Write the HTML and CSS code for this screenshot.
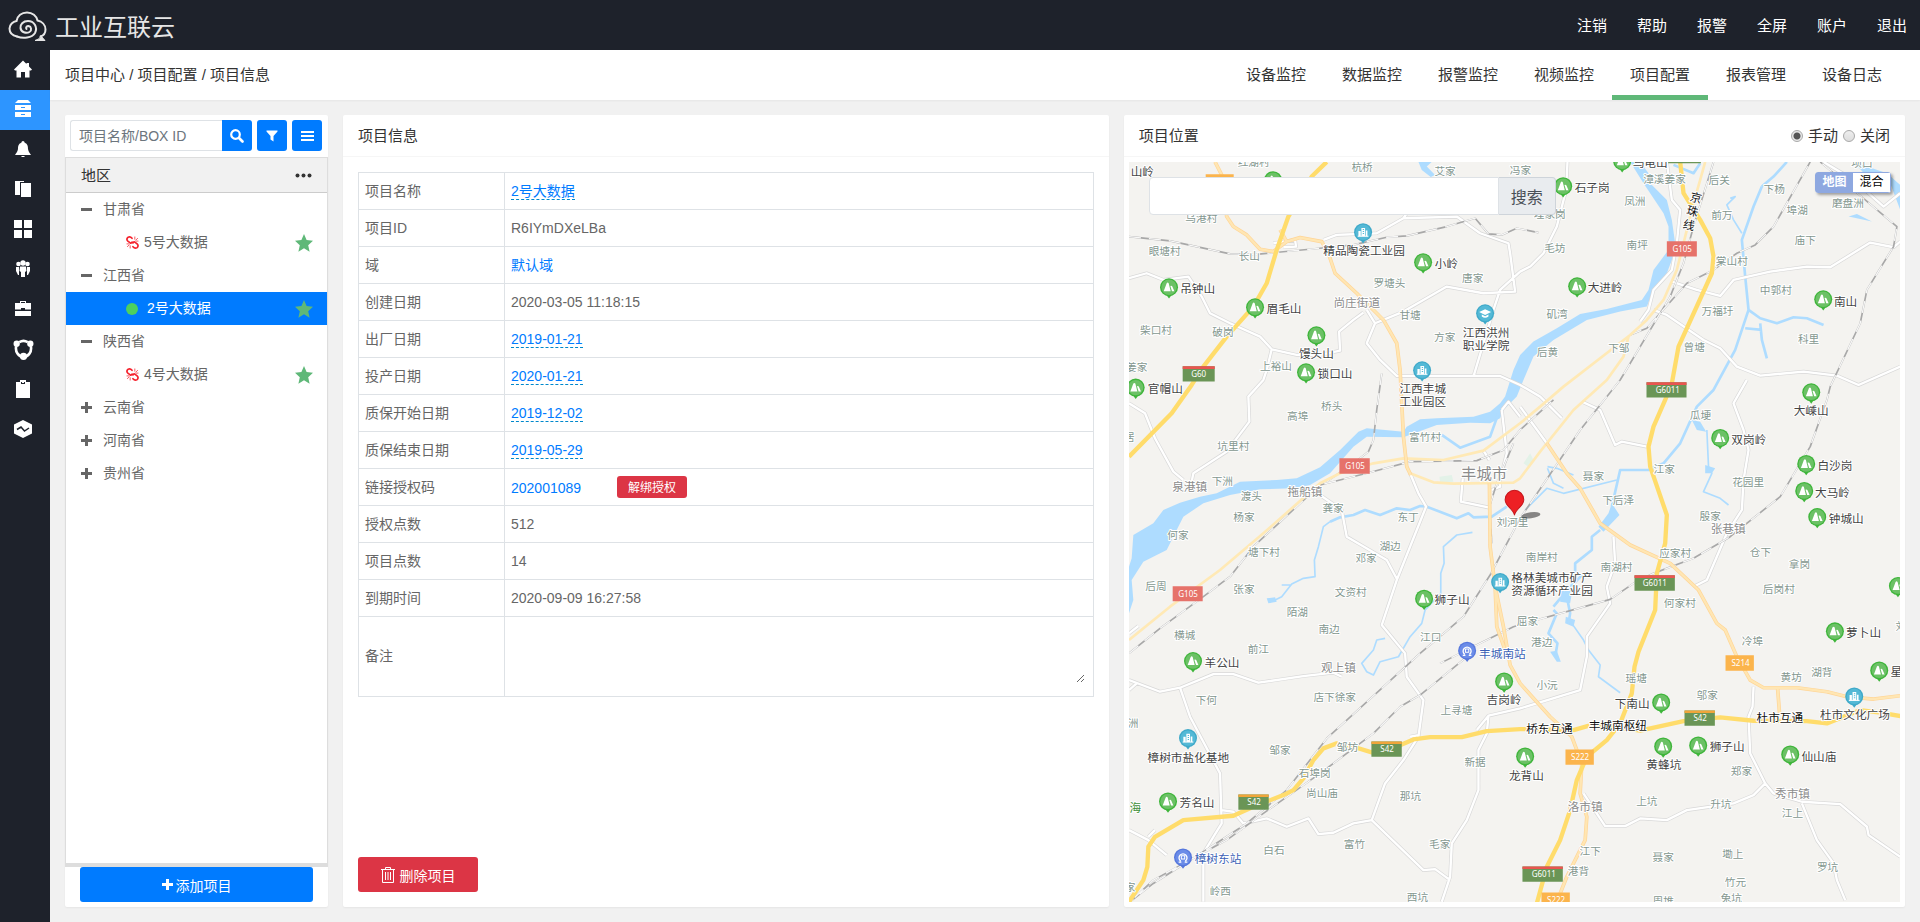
FILE: index.html
```html
<!DOCTYPE html>
<html lang="zh-CN">

<head>
  <meta charset="UTF-8" />
  <meta name="viewport" content="width=device-width, initial-scale=1.0" />
  <title>工业互联云</title>
  <link rel="stylesheet" href="styles.css">
</head>

<body>
  <header class="header">
    <a href="#" class="logo">
      <svg width="40" height="32" viewBox="0 0 40 32" fill="none" stroke="#e6e6e6" stroke-width="2" stroke-linecap="round">
        <path d="M9 25.500C4 24.500 1.500 21.500 1.500 17.500C1.500 13.500 5 10.500 8.500 10C9.500 5 13.500 1.500 19 1.500C24.500 1.500 28.500 5 29.500 9.500C34 10.500 37.500 14 37.500 18.500C37.500 22 35.500 24.500 32.500 25.500"/>
        <path d="M9 25.500C15 28 24 27 27 22C30 16 26 10 20 10C15 10 12 13.500 12.500 17C13 21 18 23 21.500 21C24 19.500 23.500 15.500 20.500 15C18.500 15 17.500 16.500 18.500 18"/>
        <path d="M33 25L37 29.500H27Q32 28.500 33 25Z" fill="#e6e6e6" stroke-width="1"/>
      </svg>
      <span>工业互联云</span>
    </a>
    <nav class="header-nav">
      <a href="#">注销</a>
      <a href="#">帮助</a>
      <a href="#">报警</a>
      <a href="#">全屏</a>
      <a href="#">账户</a>
      <a href="#">退出</a>
    </nav>
  </header>

  <div class="layout">
    <nav class="side">
      <a href="#" aria-label="首页"><svg viewBox="0 0 18 18"><path d="M9 0.500L0 9.500L1 10.500H2.500V17.500H7V12H11V17.500H15.500V10.500H17L18 9.500L15 6.500V3H12.500V4Z"/></svg></a>
      <a href="#" class="active" aria-label="项目"><svg viewBox="0 0 18 18"><path d="M4 0H14L17 3H1ZM1 5H17V10H1ZM1 12H17V17H1Z"/><path class="cut" d="M7 7H11V8H7ZM7 14H11V15H7Z"/></svg></a>
      <a href="#" aria-label="报警"><svg viewBox="0 0 18 18"><path d="M9 1C10 1 10.500 2 10.500 2.500C14 4 14 7 14 9C14.500 12 16 13 17 15H1C2 13 3.500 12 4 9C4 7 4 4 7.500 2.500C7.500 2 8 1 9 1ZM7 16H11L10 17H8Z"/></svg></a>
      <a href="#" aria-label="文件"><svg viewBox="0 0 18 18"><path d="M1 1H10V2H6V15H1ZM7 3H17V17H7Z"/></svg></a>
      <a href="#" aria-label="面板"><svg viewBox="0 0 18 18"><path d="M0 0H8V8H0ZM10 0H18V8H10ZM0 10H8V18H0ZM10 10H18V18H10Z"/></svg></a>
      <a href="#" aria-label="用户"><svg viewBox="0 0 18 18"><circle cx="4.500" cy="4" r="2.300"/><circle cx="13.500" cy="4" r="2.300"/><circle cx="9" cy="3" r="2.700"/><path d="M2 7H5V15H4L2 11ZM16 7H13V15H14L16 11ZM6 6.500H12L12.500 11L11 12V17H7V12L5.500 11Z"/></svg></a>
      <a href="#" aria-label="工具"><svg viewBox="0 0 18 18"><path d="M6 1H12V3H17V9.500H11V8H7V9.500H1V3H6ZM7 2V3H11V2ZM1 11H17V16H1Z" fill-rule="evenodd"/></svg></a>
      <a href="#" aria-label="共享"><svg class="big" viewBox="0 0 20 20"><path d="M3 7C2 12 5 17 10 17C15 17 18 12 17 7M6 3Q10 0.500 14 3" fill="none" stroke="#fff" stroke-width="2.500"/><circle cx="3.500" cy="4.500" r="3"/><circle cx="16.500" cy="4.500" r="3"/><circle cx="10" cy="16.500" r="3.500"/></svg></a>
      <a href="#" aria-label="报表"><svg viewBox="0 0 18 18"><path d="M2 2H16V18H2ZM6 0H12V5H6Z"/><path class="hole" d="M7 2V4H11V2H10V3H8V2Z"/></svg></a>
      <a href="#" aria-label="趋势"><svg viewBox="0 0 18 18"><path d="M9 0L18 4.500V13.500L9 18L0 13.500V4.500Z"/><path d="M3 9.500L7 7L10.500 11L15 8" fill="none" stroke="#1e222b" stroke-width="1.500"/></svg></a>
    </nav>

    <main class="main">
      <div class="sub-bar">
        <div class="crumb">项目中心 / 项目配置 / 项目信息</div>
        <nav class="tabs">
          <a href="#">设备监控</a>
          <a href="#">数据监控</a>
          <a href="#">报警监控</a>
          <a href="#">视频监控</a>
          <a href="#" class="active">项目配置</a>
          <a href="#">报表管理</a>
          <a href="#">设备日志</a>
        </nav>
      </div>

      <div class="content">
        <!-- 项目列表 -->
        <section class="card project-list">
          <div class="tool-bar">
            <div class="search-box">
              <input type="text" placeholder="项目名称/BOX ID" aria-label="项目名称/BOX ID" />
              <button type="button" aria-label="搜索"><svg width="14" height="14" viewBox="0 0 14 14"><circle cx="5.500" cy="5.500" r="4.300" fill="none" stroke="#fff" stroke-width="2.200"/><path d="M9 9L12.500 12.500" stroke="#fff" stroke-width="2.600" stroke-linecap="round"/></svg></button>
            </div>
            <button type="button" aria-label="筛选"><svg width="12" height="12" viewBox="0 0 12 12"><path d="M0.500 0.500H11.500V1.500L7.500 6V11.500L4.500 9.500V6L0.500 1.500Z" fill="#fff"/></svg></button>
            <button type="button" aria-label="列表"><svg width="13" height="12" viewBox="0 0 13 12"><path d="M0 1H13V3H0ZM0 5H13V7H0ZM0 9H13V11H0Z" fill="#fff"/></svg></button>
          </div>
          <div class="tree">
            <div class="tree-title">
              <span>地区</span>
              <svg width="17" height="5" viewBox="0 0 17 5"><circle cx="2.500" cy="2.500" r="2"/><circle cx="8.500" cy="2.500" r="2"/><circle cx="14.500" cy="2.500" r="2"/></svg>
            </div>
            <ul>
              <li class="area"><svg class="sign" viewBox="0 0 11 11"><path d="M0 4H11V7H0Z"/></svg>甘肃省</li>
              <li class="project"><svg class="link-off" viewBox="0 0 14 14"><use href="#unlink"/></svg><a href="#">5号大数据</a><svg class="star" viewBox="0 0 18 18"><use href="#star"/></svg></li>
              <li class="area"><svg class="sign" viewBox="0 0 11 11"><path d="M0 4H11V7H0Z"/></svg>江西省</li>
              <li class="project active"><i class="dot"></i><a href="#">2号大数据</a><svg class="star" viewBox="0 0 18 18"><use href="#star"/></svg></li>
              <li class="area"><svg class="sign" viewBox="0 0 11 11"><path d="M0 4H11V7H0Z"/></svg>陕西省</li>
              <li class="project"><svg class="link-off" viewBox="0 0 14 14"><use href="#unlink"/></svg><a href="#">4号大数据</a><svg class="star" viewBox="0 0 18 18"><use href="#star"/></svg></li>
              <li class="area"><svg class="sign" viewBox="0 0 11 11"><path d="M0 4H4V0H7V4H11V7H7V11H4V7H0Z"/></svg>云南省</li>
              <li class="area"><svg class="sign" viewBox="0 0 11 11"><path d="M0 4H4V0H7V4H11V7H7V11H4V7H0Z"/></svg>河南省</li>
              <li class="area"><svg class="sign" viewBox="0 0 11 11"><path d="M0 4H4V0H7V4H11V7H7V11H4V7H0Z"/></svg>贵州省</li>
            </ul>
          </div>
          <div class="list-foot">
            <button type="button"><svg width="11" height="11" viewBox="0 0 11 11"><path d="M0 4H4V0H7V4H11V7H7V11H4V7H0Z" fill="#fff"/></svg>添加项目</button>
          </div>
        </section>

        <!-- 项目信息 -->
        <section class="card project-info">
          <h2 class="card-title">项目信息</h2>
          <div class="info-body">
            <table>
              <tr><th>项目名称</th><td><a href="#" class="edit">2号大数据</a></td></tr>
              <tr><th>项目ID</th><td>R6IYmDXeLBa</td></tr>
              <tr><th>域</th><td><a href="#">默认域</a></td></tr>
              <tr><th>创建日期</th><td>2020-03-05 11:18:15</td></tr>
              <tr><th>出厂日期</th><td><a href="#" class="edit">2019-01-21</a></td></tr>
              <tr><th>投产日期</th><td><a href="#" class="edit">2020-01-21</a></td></tr>
              <tr><th>质保开始日期</th><td><a href="#" class="edit">2019-12-02</a></td></tr>
              <tr><th>质保结束日期</th><td><a href="#" class="edit">2019-05-29</a></td></tr>
              <tr><th>链接授权码</th><td><a href="#">202001089</a><button type="button" class="unbind">解绑授权</button></td></tr>
              <tr><th>授权点数</th><td>512</td></tr>
              <tr><th>项目点数</th><td>14</td></tr>
              <tr><th>到期时间</th><td>2020-09-09 16:27:58</td></tr>
              <tr class="remark"><th><label for="remark">备注</label></th><td><textarea id="remark"></textarea></td></tr>
            </table>
            <button type="button" class="delete"><svg width="14" height="16" viewBox="0 0 14 16" fill="none" stroke="#fff"><path d="M0 2.500H14M4.500 2V0.500H9.500V2M1.500 3V15.500H12.500V3M4.500 5V13M7 5V13M9.500 5V13"/></svg>删除项目</button>
          </div>
        </section>

        <!-- 项目位置 -->
        <section class="card project-map">
          <div class="card-title">
            <h2>项目位置</h2>
            <div class="mode">
              <input type="radio" name="mode" id="manual" checked /><label for="manual">手动</label>
              <input type="radio" name="mode" id="close" /><label for="close">关闭</label>
            </div>
          </div>
          <div class="map">
            <svg class="map-svg" viewBox="27 156 2313 2220" preserveAspectRatio="xMidYMid slice">
              <defs>
                <g id="pin"><path d="M-9 22L0 34L9 22Z"/><circle r="27"/></g>
                <g id="hill"><use href="#pin" fill="#3eb53a"/><circle r="23" fill="#6cc166"/><path d="M-16 12L-7 -12Q-4 -16 -1 -12L5 12ZM4 -4Q8 -6 10 -2L16 12H9Z" fill="#fff"/></g>
                <g id="building"><use href="#pin" fill="#3fa9c9"/><circle r="23" fill="#54b9d6"/><path d="M-14 12V-4H-7V12ZM-5 12V-13H6V12ZM8 12V-5H13V12Z" fill="#fff"/><path d="M-16 12H16" stroke="#fff" stroke-width="3"/><path d="M-1 -8H3M-1 -2H3M-1 4H3" stroke="#54b9d6" stroke-width="3"/></g>
                <g id="school"><use href="#pin" fill="#3fa9c9"/><circle r="23" fill="#54b9d6"/><path d="M-18 -4L0 -12L18 -4L0 5ZM-10 4L0 9L10 4V10Q0 17 -10 10Z" fill="#fff"/></g>
                <g id="station"><use href="#pin" fill="#5677dc"/><circle r="23" fill="#6b8ce8"/><path d="M-7 11A12 12 0 1 1 7 11M-13 14H-5M5 14H13" fill="none" stroke="#fff" stroke-width="4"/><path d="M-5 -5H5V5H-5Z" fill="none" stroke="#fff" stroke-width="3"/></g>
                <path id="star" d="M9 0L11.600 6.100L18 6.800L13.200 11.200L14.600 17.700L9 14.300L3.400 17.700L4.800 11.200L0 6.800L6.400 6.100Z"/>
                <g id="unlink" fill="none" stroke="#f5222d" stroke-linecap="round"><path d="M6.500 2.500Q4.500 0 2 1.500Q0 3.500 2 5.500L4.500 7.500Q6 8 6.500 6.500M7.500 11.500Q9.500 14 12 12.500Q14 10.500 12 8.500L9.500 6.500Q8 6 7.500 7.500" stroke-width="1.800"/><path d="M9.500 3.500V1M10.500 4.500L12.500 2.500M11 5.500H13M4.500 10.500V13M3.500 9.500L1.500 11.500M3 8.500H1" stroke-width="0.800"/></g>
              </defs>

              <!-- 水系 -->
              <g class="water">
                <path d="M1530 156L1570 220L1630 310L1645 350L1645 420L1600 480L1585 540L1565 570L1460 597L1380 612L1310 655L1240 695L1200 735L1180 780L1155 860L1140 880L1110 905L1060 920L950 925L900 928L860 950L850 965L740 955L715 965L660 1020L600 1072L530 1105L470 1110L360 1115L290 1150L240 1160L180 1178L130 1200L100 1240L40 1275L35 1345L27 1370V1510L40 1470L35 1410L70 1355L140 1320L170 1260L190 1220L250 1180L330 1155L420 1138L520 1135L570 1125L630 1090L700 1010L740 980L850 982L950 945L1050 938L1110 940L1140 925L1150 900L1190 860L1210 810L1240 740L1300 690L1400 630L1500 605L1580 590L1600 540L1640 490L1655 450L1665 400L1655 330L1640 270L1590 220L1585 190L1560 156Z"/>
                <path d="M895 156L905 180L932 201L945 195L920 170L935 156ZM1475 1180L1498 1215L1450 1265L1435 1250L1465 1210ZM1715 930L1740 935L1758 965L1730 960ZM2185 320L2210 312L2255 335ZM1755 1065L1785 1075L1775 1090H1755ZM440 1465L465 1462L470 1475L445 1480ZM1320 1440L1355 1450L1350 1480L1320 1475ZM1337 1520L1365 1530L1360 1550L1335 1540ZM1290 1625L1310 1622L1322 1655H1310ZM2200 156L2240 200L2310 220L2340 300V225L2300 190Z"/>
                <path class="w8" d="M965 975L1020 1013L1110 980L1135 910M630 1235L660 1222L700 1215L735 1200L780 1215L830 1195L870 1200L900 1188L920 1190L1010 1225L1045 1210L1060 1222L1115 1220L1160 1190M1925 230L1900 290L1865 390L1875 500L1885 600L1845 720L1780 840L1730 890L1680 1000L1630 1060L1585 1080L1500 1080L1475 1190M2000 156L1960 200L1925 230M1885 600L1920 625L1970 640L2020 622L2060 625L2110 645M1920 640L1925 690L1940 745M1875 655L1925 660M1660 165L1720 190L1740 160"/>
                <path class="w5" d="M630 1235L610 1250L595 1310L583 1350L585 1400L550 1405L515 1422L485 1460L465 1470M515 1425L485 1425M1057 1267L1010 1275L970 1310L972 1360L962 1390V1450L915 1500L905 1540L870 1580L835 1640L780 1655L760 1695L740 1685L725 1660L760 1620L770 1590L795 1585M1215 1200L1280 1135L1330 1150L1490 1110M1282 1070L1310 1075L1360 1095M1282 1075L1300 1120L1330 1135M1830 265L1845 260L1820 285L1840 330L1865 370M1760 960L1765 1070L1775 1090L1750 1145L1800 1165L1825 1185M1355 1540L1390 1590L1405 1620L1440 1665L1435 1700L1500 1748"/>
                <path class="w8" d="M1440 1260L1415 1280V1320L1365 1360V1400L1340 1460L1350 1510L1345 1540M1300 1500L1310 1510L1285 1570L1312 1600L1305 1640M1300 1490L1325 1460L1390 1390"/>
              </g>
              <path d="M958 1100L995 1095L1000 1115L960 1117ZM1210 1060L1230 1030L1240 1050L1225 1070Z" fill="#e3f2e8"/>

              <!-- 县乡道路 -->
              <g class="road-edge">
                <path id="lanes" d="M27 505L80 490L130 510L205 500L245 560L270 610L330 640L420 680L455 718L530 735H600L660 722L657 665L700 630L730 608M455 718L440 780L430 810L385 860L388 935L320 1025L220 1090L215 1115M27 880L75 910L105 985L160 1085L190 1110M610 390L650 375L770 370L850 325L1010 320L1080 370L1165 400L1170 430L1185 545L1090 550L980 530L850 605L765 640L740 700L780 750L830 798H1140L1200 825L1260 860L1325 925M740 600L765 640M850 325L860 310M1200 485L1140 540L1120 600L1060 800M1342 156L1338 240L1310 350L1270 430L1230 470L1200 485M1640 156L1655 270L1680 300L1670 400L1655 480L1600 540L1585 600L1560 635M1655 515L1730 540L1800 558L1840 510L1950 485L2060 470L2130 472L2250 398L2320 412L2340 395M1600 600L1640 615L1750 690L1800 715L1850 770L1920 797L2050 785L2150 797L2215 825L2340 770M1880 810L1840 880L1870 960L1885 1020L1870 1110L1865 1200L1820 1270L1760 1410L1720 1430M1385 875L1440 900L1485 1005L1505 995L1580 1010M1200 890L1280 1000M1480 1280L1485 1360L1460 1430L1470 1480L1400 1580V1640L1380 1740L1200 1795L1105 1817L1100 1870L1075 1920V2040L1040 2130L995 2200L990 2300L965 2375M870 1090L895 1150L918 1190L830 1410L785 1545L855 1630L860 1700L910 1770L895 1880L850 1950L795 2020L755 2130L910 2280L945 2277L990 2310M600 1155L665 1200L680 1280L800 1350L832 1410M27 1710L120 1745L180 1733L280 1692H340L415 1718L550 1698L640 1688L665 1700M27 1740L50 1720M180 1733L210 1820L300 1990L305 2140L280 2180L250 2230V2375M305 2100L340 2105L370 2140L440 2125L500 2150L565 2125L595 2172L640 2168L700 2140L755 2130M27 2160L85 2190L140 2235M85 2180L105 2160M870 1880L895 1875M1900 1730L1897 1790L1885 1820L1890 1930L1935 2020L1960 2050L2045 2075L2160 2082L2240 2150L2245 2175L2340 2240M2045 2080L2090 2190L2140 2260L2150 2310L2175 2370M1935 2020L1900 2055L1840 2080L1700 2100L1640 2130L1560 2125L1515 2148H1455L1390 2050M2110 156L2200 210L2290 290L2340 250M1028 1105L1022 1175L1108 1193M1090 1022L1108 1050M1115 1140L1140 1130V1110M1145 900L1165 875L1200 920M1145 900L1160 1030L1140 1110M1070 1860L1105 1817M27 1570L55 1548M460 400L525 390L528 410L490 412"/>
              </g>
              <use href="#lanes" class="road-face"/>

              <!-- 铁路 -->
              <g class="rail-edge">
                <path id="rails" d="M27 380L150 393L330 432L400 434L600 415L700 405L800 382L860 378L980 350L1065 325L1105 372L1145 375L1190 355L1255 368M785 790L770 900L760 990L745 1025L700 1060L620 1115M27 1630L120 1555L250 1460L330 1400L400 1310L600 1125L740 1090L870 1055L1070 1052L1150 1020L1200 960L1300 870M1530 675L1580 655L1700 520L1780 480L1850 430L1905 405L1960 350L2070 156M1780 156L1720 350L1690 460L1650 560L1500 810L1380 960L1200 1225L1110 1395L1030 1520L900 1630L620 1885L500 2040L380 2140L250 2225L100 2320L30 2375M1080 1600L1180 1550L1470 1468L1540 1420L1600 1390L1720 1345L1830 1280L1980 1160L2070 1010L2120 870L2130 830L2220 640L2240 540L2320 410L2330 350L2100 156M1080 1600L960 1660M1041 1640L900 1755L840 1790L760 1870L600 1990L430 2110L320 2190L100 2310L30 2375M1108 1190L1130 1120L1180 1000M1110 1220L1115 1300"/>
              </g>
              <use href="#rails" class="rail-face"/>

              <!-- 省道国道 -->
              <path class="national" d="M27 1590L150 1490L300 1380L430 1270L600 1120L660 1090L760 1060L850 1045L970 1050L1090 1022L1200 940L1260 890L1330 830L1530 675L1580 630L1630 570L1670 480L1695 380L1720 280L1740 210L1755 156M1525 680L1510 740L1460 810L1360 900L1260 1025L1200 1105L1180 1118L1000 1121L940 1117L870 1090"/>
              <g class="prov-edge">
                <path id="provincial" d="M285 156L305 195L320 320L340 350L380 375L420 418L460 425L500 395L540 383L605 395L625 430L645 490L710 550L790 630L830 700L840 780L850 980L860 1070L872 1095M480 360L500 395M1108 1120L1110 1310L1125 1430L1130 1550L1155 1620M1125 1430L1150 1550L1170 1665L1200 1720L1290 1820L1355 1880L1385 1960L1380 2050L1400 2120L1395 2190L1340 2300L1320 2350M1280 1000L1340 1090L1380 1135L1440 1240L1530 1305L1650 1360L1735 1440L1790 1540L1815 1560L1850 1640L1890 1710L1930 1733H2030L2120 1745L2180 1760L2260 1767L2340 1757M1972 1733L1978 1810"/>
              </g>
              <use href="#provincial" class="prov-face"/>

              <!-- 高速 -->
              <path class="highway" d="M620 156L575 200L505 320L470 420L440 520L400 590L320 680L250 770L215 825L155 910L27 1040M1680 156L1690 250L1740 330L1770 385L1780 440L1775 490L1675 710L1655 820L1635 870L1600 950L1585 1010L1590 1070L1640 1215L1635 1300L1610 1390L1605 1500L1555 1625L1543 1670L1535 1750L1500 1840L1460 1890L1400 1940L1370 2010L1350 2100L1320 2190L1280 2270L1250 2380M27 2375L70 2310L82 2270L85 2210L105 2180L190 2130L340 2117L400 2090L490 2055L520 2040L550 2005L580 1950L610 1915L650 1900L700 1910L755 1927L810 1918L880 1888L930 1881H1025L1100 1863L1200 1857L1360 1860L1420 1843L1480 1850L1560 1862L1690 1833L1800 1822L1900 1832L2060 1833L2120 1840L2220 1800L2280 1808L2340 1818"/>

              <!-- 路牌 -->
              <g class="shield">
                <path class="green" d="M188 769H284V815H188ZM1579 817H1699V863H1579ZM1543 1396H1664V1442H1543ZM1207 2269H1328V2315H1207ZM754 1894H845V1940H754ZM355 2053H446V2099H355ZM1693 1801H1784V1847H1693ZM1644 130H1742V160H1644Z"/>
                <path class="red-top" d="M188 769H284V777H188ZM1579 817H1699V825H1579ZM1543 1396H1664V1404H1543ZM1207 2269H1328V2277H1207Z"/>
                <path class="orange-top" d="M754 1894H845V1902H754ZM355 2053H446V2061H355ZM1693 1801H1784V1809H1693Z"/>
                <path class="red" d="M1640 394H1730V440H1640ZM658 1045H749V1091H658ZM158 1429H248V1474H158Z"/>
                <path class="orange" d="M257 193H341V239H257ZM1816 1636H1901V1682H1816ZM1336 1918H1421V1964H1336ZM1264 2347H1349V2393H1264Z"/>
                <text x="236" y="802">G60</text>
                <text x="1643" y="850">G6011</text>
                <text x="1604" y="1429">G6011</text>
                <text x="1271" y="2302">G6011</text>
                <text x="801" y="1927">S42</text>
                <text x="402" y="2086">S42</text>
                <text x="1740" y="1834">S42</text>
                <text x="1686" y="426">G105</text>
                <text x="705" y="1077">G105</text>
                <text x="204" y="1460">G105</text>
                <text x="1861" y="1668">S214</text>
                <text x="1380" y="1950">S222</text>
                <text x="1308" y="2379">S222</text>
              </g>

              <!-- 村庄 -->
              <g class="village">
                <text x="134" y="436">眼塘村</text><text x="388" y="450">长山</text>
                <text x="108" y="672">柴口村</text><text x="309" y="679">破岗</text>
                <text x="468" y="781">上裕山</text><text x="50" y="782">姜家</text>
                <text x="726" y="183">杭桥</text><text x="975" y="196">艾家</text>
                <text x="401" y="168">红湖村</text><text x="244" y="336">乌港村</text>
                <text x="808" y="532">罗塘头</text><text x="1058" y="516">唐家</text>
                <text x="870" y="627">甘塘</text><text x="974" y="694">方家</text>
                <text x="1201" y="192">冯家</text><text x="1633" y="219">漳溪姜家</text>
                <text x="1797" y="221">后关</text><text x="1544" y="285">凤洲</text>
                <text x="1805" y="326">前万</text><text x="1962" y="248">下杨</text>
                <text x="2031" y="312">埠湖</text><text x="2183" y="292">磨盘洲</text>
                <text x="2225" y="170">坝口</text><text x="2055" y="402">庙下</text>
                <text x="1304" y="426">毛坊</text><text x="1289" y="325">埋家岗</text>
                <text x="1551" y="417">南坪</text><text x="1835" y="465">棠山村</text>
                <text x="1967" y="552">中郭村</text><text x="1311" y="624">矶湾</text>
                <text x="1792" y="615">万福圩</text><text x="1282" y="738">后黄</text>
                <text x="1496" y="726">下邹</text><text x="1722" y="724">曾塘</text>
                <text x="2065" y="700">科里</text><text x="635" y="900">桥头</text>
                <text x="533" y="930">高埠</text><text x="28" y="994">居</text>
                <text x="340" y="1021">坑里村</text><text x="915" y="993">富竹村</text>
                <text x="307" y="1125">下洲</text><text x="394" y="1170">渡头</text>
                <text x="639" y="1207">龚家</text><text x="372" y="1232">杨家</text>
                <text x="864" y="1232">东丁</text><text x="174" y="1287">何家</text>
                <text x="432" y="1337">塘下村</text><text x="810" y="1319">湖边</text>
                <text x="738" y="1357">邓家</text><text x="108" y="1440">后周</text>
                <text x="372" y="1450">张家</text><text x="692" y="1459">文资村</text>
                <text x="532" y="1519">陌湖</text><text x="627" y="1569">南边</text>
                <text x="932" y="1592">江口</text><text x="194" y="1587">横城</text>
                <text x="415" y="1630">前江</text><text x="1177" y="1247">刘河里</text>
                <text x="1420" y="1110">聂家</text><text x="1632" y="1089">江家</text>
                <text x="1494" y="1183">下后泽</text><text x="1741" y="926">瓜埂</text>
                <text x="1884" y="1129">花园里</text><text x="1770" y="1230">殷家</text>
                <text x="1665" y="1340">应家村</text><text x="1921" y="1339">仓下</text>
                <text x="2038" y="1374">拿岗</text><text x="1265" y="1352">南岸村</text>
                <text x="1489" y="1382">南湖村</text><text x="1976" y="1450">后岗村</text>
                <text x="1679" y="1490">何家村</text><text x="1222" y="1545">屈家</text>
                <text x="1265" y="1608">港边</text><text x="1897" y="1605">冷埠</text>
                <text x="2342" y="1560">刘</text><text x="644" y="1774">店下徐家</text>
                <text x="259" y="1783">下何</text><text x="1009" y="1812">上寻塘</text>
                <text x="39" y="1850">洲</text><text x="480" y="1931">邹家</text>
                <text x="682" y="1923">邹坊</text><text x="584" y="2002">石埠岗</text>
                <text x="606" y="2062">尚山庙</text><text x="871" y="2070">那坑</text>
                <text x="1065" y="1969">新据</text><text x="462" y="2232">白石</text>
                <text x="703" y="2215">富竹</text><text x="959" y="2213">毛家</text>
                <text x="30" y="2342">家</text><text x="301" y="2356">岭西</text>
                <text x="892" y="2372">西坑</text><text x="1281" y="1737">小沅</text>
                <text x="1548" y="1716">瑶塘</text><text x="1761" y="1767">邬家</text>
                <text x="2013" y="1713">黄坊</text><text x="2105" y="1699">湖背</text>
                <text x="1864" y="1995">郑家</text><text x="1580" y="2086">上坑</text>
                <text x="1802" y="2095">升坑</text><text x="2017" y="2120">江上</text>
                <text x="1410" y="2235">江下</text><text x="1375" y="2295">港背</text>
                <text x="1629" y="2253">聂家</text><text x="1838" y="2243">墈上</text>
                <text x="2122" y="2284">罗坑</text><text x="1846" y="2328">竹元</text>
                <text x="1833" y="2375">兔坑</text><text x="1629" y="2386">周堆</text>
              </g>

              <!-- 乡镇 -->
              <g class="town">
                <text x="710" y="591">尚庄街道</text><text x="209" y="1143">泉港镇</text>
                <text x="555" y="1158">拖船镇</text><text x="1824" y="1270">张巷镇</text>
                <text x="655" y="1686">观上镇</text><text x="1395" y="2104">洛市镇</text>
                <text x="2017" y="2064">秀市镇</text>
                <text class="city" x="1092" y="1107">丰城市</text>
              </g>

              <!-- 兴趣点 -->
              <g>
                <use href="#hill" x="147" y="532"/><use href="#hill" x="405" y="592"/>
                <use href="#hill" x="909" y="457"/><use href="#hill" x="589" y="676"/>
                <use href="#hill" x="558" y="787"/><use href="#hill" x="47" y="833"/>
                <use href="#hill" x="459" y="211"/><use href="#hill" x="1329" y="229"/>
                <use href="#hill" x="1506" y="154"/><use href="#hill" x="1371" y="529"/>
                <use href="#hill" x="2109" y="568"/><use href="#hill" x="912" y="1466"/>
                <use href="#hill" x="1800" y="984"/><use href="#hill" x="2073" y="847"/>
                <use href="#hill" x="2058" y="1062"/><use href="#hill" x="2052" y="1143"/>
                <use href="#hill" x="2091" y="1221"/><use href="#hill" x="2333" y="1428"/>
                <use href="#hill" x="2144" y="1564"/><use href="#hill" x="219" y="1653"/>
                <use href="#hill" x="144" y="2074"/><use href="#hill" x="1152" y="1714"/>
                <use href="#hill" x="1215" y="1939"/><use href="#hill" x="1623" y="1777"/>
                <use href="#hill" x="2277" y="1681"/><use href="#hill" x="1629" y="1909"/>
                <use href="#hill" x="1734" y="1906"/><use href="#hill" x="2010" y="1933"/>
                <use href="#building" x="729" y="367"/><use href="#building" x="906" y="781"/>
                <use href="#building" x="1140" y="1416"/><use href="#building" x="204" y="1884"/>
                <use href="#building" x="2202" y="1759"/><use href="#school" x="1095" y="610"/>
                <use href="#station" x="1041" y="1622"/><use href="#station" x="189" y="2242"/>
              </g>
              <g class="poi">
                <text x="67" y="199">山岭</text><text x="732" y="434">精品陶瓷工业园</text>
                <text x="979" y="474">小岭</text><text x="233" y="550">吊钟山</text>
                <text x="492" y="610">眉毛山</text><text x="589" y="743">馒头山</text>
                <text x="645" y="804">锁口山</text><text x="136" y="849">官帽山</text>
                <text x="1098" y="680">江西洪州<tspan x="1098" dy="39">职业学院</tspan></text>
                <text x="908" y="849">江西丰城<tspan x="908" dy="39">工业园区</tspan></text>
                <text x="1416" y="245">石子岗</text><text x="1590" y="171">乌龟山</text>
                <text x="1455" y="547">大进岭</text><text x="2176" y="587">南山</text>
                <text x="996" y="1483">狮子山</text><text x="1886" y="1003">双岗岭</text>
                <text x="1296" y="1415">格林美城市矿产<tspan x="1296" dy="39">资源循环产业园</tspan></text>
                <text x="2073" y="915">大嵊山</text><text x="2144" y="1081">白沙岗</text>
                <text x="2137" y="1161">大马岭</text><text x="2178" y="1239">钟城山</text>
                <text x="2230" y="1581">萝卜山</text><text x="306" y="1671">羊公山</text>
                <text x="205" y="1955">樟树市盐化基地</text><text x="231" y="2091">芳名山</text>
                <text x="1152" y="1783">吉岗岭</text><text x="1219" y="2009">龙背山</text>
                <text x="1536" y="1793">下南山</text><text x="2328" y="1698">星</text>
                <text x="2204" y="1827">杜市文化广场</text><text x="1631" y="1978">黄蜂坑</text>
                <text x="1821" y="1924">狮子山</text><text x="2096" y="1952">仙山庙</text>
                <text class="black" x="1288" y="1870">桥东互通</text>
                <text class="black" x="1493" y="1860">丰城南枢纽</text>
                <text class="black" x="1979" y="1835">杜市互通</text>
                <text class="blue" x="1147" y="1643">丰城南站</text>
                <text class="blue" x="294" y="2260">樟树东站</text>
                <text class="green" x="46" y="2106">海</text>
                <text class="black" transform="translate(1724 276) rotate(14)">京</text>
                <text class="black" transform="translate(1714 316) rotate(14)">珠</text>
                <text class="black" transform="translate(1703 358) rotate(14)">线</text>
              </g>

              <!-- 当前项目 -->
              <ellipse cx="1232" cy="1216" rx="29" ry="9" fill="#000" opacity="0.450" transform="rotate(-8 1232 1216)"/>
              <path d="M1183 1215C1178 1195 1155 1188 1155 1169A28 28 0 0 1 1211 1169C1211 1188 1188 1195 1183 1215Z" fill="#ed2024" stroke="#c4161c" stroke-width="3"/>
            </svg>
            <div class="map-search">
              <input type="text" aria-label="搜索地点" />
              <button type="button">搜索</button>
            </div>
            <div class="map-type">
              <button type="button" class="active">地图</button>
              <button type="button">混合</button>
            </div>
          </div>
        </section>
      </div>
    </main>
  </div>
</body>

</html>
```
FILE: styles.css
```css
* {
  margin: 0;
  padding: 0;
  box-sizing: border-box;
}

body {
  display: flex;
  flex-direction: column;
  height: 100vh;
  font-family: "Liberation Sans", "Noto Sans CJK SC", sans-serif;
  font-size: 14px;
  line-height: 21px;
  color: #666;
  background-color: #f1f1f1;
}

a {
  color: #007bff;
  text-decoration: none;
}

ul {
  list-style: none;
}

button,
input,
textarea {
  font-family: inherit;
}

button {
  border: none;
  cursor: pointer;
}

h2 {
  font-size: 15px;
  font-weight: normal;
}

/* 顶部 */
.header {
  display: flex;
  justify-content: space-between;
  align-items: center;
  height: 50px;
  padding: 0 13px 0 8px;
  background-color: #1e222b;
}

.logo {
  display: flex;
  align-items: center;
  gap: 7px;
  padding-top: 4px;
  font-size: 24px;
  color: #e6e6e6;
}

.header-nav {
  display: flex;
  gap: 30px;
  font-size: 15px;
}

.header-nav a {
  color: #fff;
}

.layout {
  flex: 1;
  display: flex;
  min-height: 0;
}

/* 左侧菜单 */
.side {
  width: 50px;
  background-color: #1e222b;
}

.side a {
  display: flex;
  justify-content: center;
  align-items: center;
  height: 40px;
  padding: 0 4px 2px 0;
}

.side a.active {
  background-color: #2d95ff;
}

.side svg {
  width: 18px;
  height: 18px;
  fill: #fff;
}

.side .big {
  width: 21px;
  height: 21px;
}

.side .cut {
  fill: #2d95ff;
}

.side .hole {
  fill: #1e222b;
}

.main {
  flex: 1;
  display: flex;
  flex-direction: column;
  min-width: 0;
}

.sub-bar {
  display: flex;
  justify-content: space-between;
  height: 50px;
  padding: 0 20px 0 15px;
  font-size: 15px;
  line-height: 40px;
  color: #333;
  background-color: #fff;
  box-shadow: 0 1px 2px rgba(0, 0, 0, 0.05);
}

.crumb {
  padding-top: 5px;
}

.tabs {
  display: flex;
}

.tabs a {
  padding: 5px 18px 0;
  border-bottom: 5px solid transparent;
  color: #333;
}

.tabs a.active {
  border-color: #5fb878;
}

.content {
  flex: 1;
  display: grid;
  grid-template-columns: 263px 99fr 101fr;
  gap: 15px;
  min-height: 0;
  padding: 15px;
}

.card {
  display: flex;
  flex-direction: column;
  min-width: 0;
  min-height: 0;
  border-radius: 2px;
  background-color: #fff;
  box-shadow: 0 1px 2px rgba(0, 0, 0, 0.05);
}

.card-title {
  display: flex;
  justify-content: space-between;
  align-items: center;
  height: 42px;
  padding: 0 15px;
  border-bottom: 1px solid #f6f6f6;
  font-size: 15px;
  color: #333;
}

/* 项目列表 */
.tool-bar {
  display: flex;
  gap: 5px;
  padding: 5px 6px 5px 5px;
}

.tool-bar button {
  display: flex;
  justify-content: center;
  align-items: center;
  width: 30px;
  height: 31px;
  border-radius: 3px;
  background-color: #007bff;
}

.search-box {
  flex: 1;
  display: flex;
  min-width: 0;
}

.search-box input {
  flex: 1;
  min-width: 0;
  height: 31px;
  padding: 0 8px;
  border: 1px solid #dee2e6;
  border-right: none;
  border-radius: 3px 0 0 3px;
  font-size: 14px;
}

.search-box input::placeholder {
  color: #6c757d;
}

.search-box button {
  border-radius: 0 3px 3px 0;
}

.tree {
  flex: 1;
  min-height: 0;
  margin-top: 1px;
  border: 1px solid #ddd;
  border-bottom-width: 4px;
}

.tree-title {
  display: flex;
  justify-content: space-between;
  align-items: center;
  height: 35px;
  padding: 0 15px;
  border-bottom: 1px solid #ccc;
  font-size: 15px;
  color: #333;
  background-color: #f1f1f1;
}

.tree-title svg {
  fill: #333;
}

.tree li {
  display: flex;
  align-items: center;
  height: 33px;
}

.tree .area {
  gap: 11px;
  padding-left: 15px;
}

.tree .project {
  gap: 5px;
  padding: 0 14px 0 60px;
}

.tree .project a {
  flex: 1;
  color: #666;
}

.tree .project.active {
  gap: 9px;
  background-color: #007bff;
}

.tree .project.active a {
  color: #fff;
}

.sign {
  width: 11px;
  height: 11px;
  fill: #666;
}

.link-off {
  width: 13px;
  height: 13px;
}

.dot {
  width: 12px;
  height: 12px;
  border-radius: 50%;
  background-color: #4dd05f;
}

.star {
  width: 18px;
  height: 18px;
  fill: #5fb878;
}

.list-foot {
  padding: 0 15px 5px;
}

.list-foot button {
  display: flex;
  justify-content: center;
  align-items: center;
  gap: 3px;
  width: 100%;
  height: 35px;
  border-radius: 3px;
  font-size: 14px;
  color: #fff;
  background-color: #007bff;
}

/* 项目信息 */
.info-body {
  flex: 1;
  display: flex;
  flex-direction: column;
  justify-content: space-between;
  align-items: flex-start;
  padding: 15px;
}

.info-body table {
  width: 100%;
  border-collapse: collapse;
}

.info-body th,
.info-body td {
  height: 37px;
  padding: 0 6px;
  border: 1px solid #dee2e6;
  font-weight: normal;
  text-align: left;
}

.info-body th {
  width: 146px;
}

.info-body .edit {
  border-bottom: 1px dashed #0088cc;
}

.info-body .remark td {
  height: 80px;
  padding-right: 8px;
}

.info-body textarea {
  display: block;
  width: 100%;
  height: 52px;
  border: none;
  font-size: 14px;
  background-color: transparent;
}

.unbind {
  height: 22px;
  margin-left: 36px;
  padding: 0 11px;
  border-radius: 3px;
  font-size: 12px;
  color: #fff;
  background-color: #dc3545;
}

.delete {
  display: flex;
  justify-content: center;
  align-items: center;
  gap: 5px;
  width: 120px;
  height: 35px;
  border-radius: 3px;
  font-size: 14px;
  color: #fff;
  background-color: #dc3545;
}

/* 项目位置 */
.mode {
  display: flex;
  align-items: center;
  gap: 5px;
}

.mode input {
  width: 12px;
  height: 12px;
  border: 1px solid #a9a9a9;
  border-radius: 50%;
  background: linear-gradient(#eee, #ddd);
  appearance: none;
}

.mode input:checked {
  background: radial-gradient(circle, #555 3px, #e8e8e8 4px);
}

.map {
  position: relative;
  flex: 1;
  min-height: 0;
  margin: 5px;
  overflow: hidden;
}

.map-svg {
  display: block;
  width: 100%;
  height: 100%;
  background-color: #f4f3f0;
}

.map-svg path {
  stroke-linejoin: round;
}

.water {
  fill: #aedcff;
}

.water .w8,
.water .w5 {
  fill: none;
  stroke: #aedcff;
  stroke-width: 8px;
}

.water .w5 {
  stroke-width: 5px;
}

#lanes,
#rails,
#provincial {
  fill: none;
}

.road-edge {
  stroke: #d8d8d8;
  stroke-width: 11px;
}

.road-face {
  stroke: #fff;
  stroke-width: 7px;
}

.rail-edge {
  stroke: #a8a8a8;
  stroke-width: 5px;
}

.rail-face {
  stroke: #f7f7f7;
  stroke-width: 4px;
  stroke-dasharray: 36 24;
}

.national {
  fill: none;
  stroke: #ffe9b5;
  stroke-width: 8px;
}

.prov-edge {
  stroke: #ffd596;
  stroke-width: 11px;
}

.prov-face {
  stroke: #ffe6b3;
  stroke-width: 7px;
}

.highway {
  fill: none;
  stroke: #ffdc6b;
  stroke-width: 13px;
}

.shield .green {
  fill: #6a9556;
}

.shield .red-top {
  fill: #e95550;
}

.shield .orange-top {
  fill: #f0a53a;
}

.shield .red {
  fill: #e6726a;
}

.shield .orange {
  fill: #fbb44c;
}

.map-svg text {
  text-anchor: middle;
}

.shield text {
  font-family: "Noto Sans", sans-serif;
  font-size: 24px;
  fill: #fff;
}

.village,
.town,
.poi {
  font-family: "Noto Sans CJK SC", sans-serif;
  stroke: #fff;
  stroke-width: 6px;
  stroke-linejoin: round;
  paint-order: stroke;
}

.village {
  font-size: 32px;
  fill: #84978f;
}

.town {
  font-size: 35px;
  fill: #8c8c8c;
}

.town .city {
  font-size: 46px;
}

.poi {
  font-size: 35px;
  fill: #444;
}

.poi .black {
  fill: #111;
}

.poi .blue {
  fill: #3b5fb5;
}

.poi .green {
  fill: #3f8f3a;
}

.map-search {
  position: absolute;
  top: 15px;
  left: 20px;
  display: flex;
}

.map-search input {
  width: 350px;
  height: 38px;
  padding: 0 12px;
  border: 1px solid #dee2e6;
  border-radius: 4px 0 0 4px;
  font-size: 16px;
}

.map-search button {
  padding: 0 12px;
  border: 1px solid #ced4da;
  border-left: none;
  border-radius: 0 4px 4px 0;
  font-size: 16px;
  color: #495057;
  background-color: #e9ecef;
}

.map-type {
  position: absolute;
  top: 10px;
  right: 9px;
  display: flex;
  border: 1px solid #8ea8e0;
  border-radius: 3px;
  box-shadow: 2px 2px 3px rgba(0, 0, 0, 0.35);
}

.map-type button {
  width: 37px;
  height: 19px;
  font-size: 12px;
  line-height: 19px;
  color: #000;
  background-color: #fff;
}

.map-type .active {
  font-weight: bold;
  color: #fff;
  background-color: #8ea8e0;
}
```
